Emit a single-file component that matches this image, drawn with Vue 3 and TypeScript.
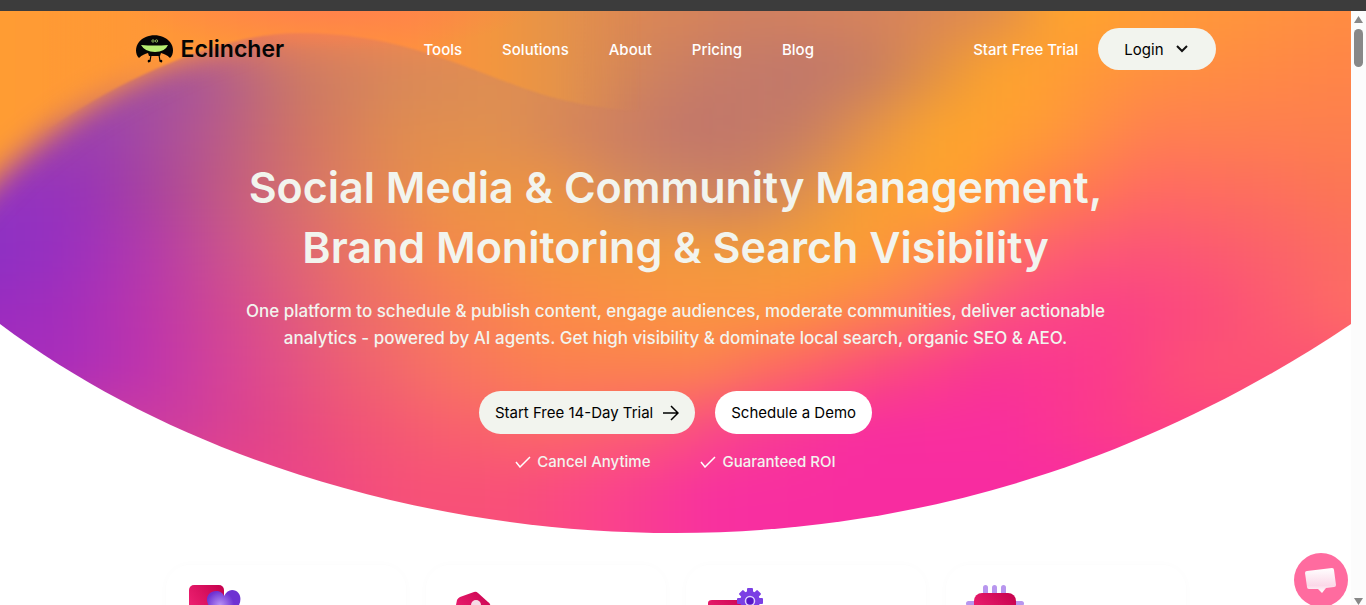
<script setup lang="ts">
const rows: { y: number; stops: [number, string][] }[] = [
  { y: 0, stops: [[0, '#ff9f30'], [150, '#ff9440'], [300, '#ff8449'], [400, '#ff8648'], [520, '#ee8e48'], [600, '#e08a50'], [750, '#d08060'], [900, '#d8845a'], [1000, '#e08c4c'], [1060, '#ffa52c'], [1200, '#ff983a'], [1351, '#ff8c42']] },
  { y: 60, stops: [[0, '#a050a0'], [150, '#a050a0'], [200, '#a95696'], [300, '#cb7a65'], [400, '#d8885a'], [500, '#de8e52'], [600, '#d98a54'], [700, '#c77c66'], [800, '#c0776c'], [870, '#c67c62'], [950, '#e8963e'], [1000, '#ffa52c'], [1150, '#ff9040'], [1351, '#ff8448']] },
  { y: 120, stops: [[0, '#a044a8'], [50, '#a044a8'], [100, '#9a40b0'], [150, '#a64ca0'], [200, '#b45690'], [300, '#d07464'], [400, '#e08c50'], [500, '#e09050'], [600, '#cf8060'], [700, '#c0756c'], [800, '#c67c64'], [900, '#f09c3c'], [950, '#ffa62b'], [1050, '#ff9a38'], [1150, '#ff8050'], [1351, '#fd7f4e']] },
  { y: 180, stops: [[0, '#9334c0'], [75, '#9632ba'], [150, '#a8429f'], [250, '#ca6279'], [350, '#e0805c'], [450, '#ec9244'], [550, '#ec9444'], [650, '#d08860'], [750, '#cc8060'], [800, '#dc9050'], [870, '#fa9f33'], [950, '#ffa22e'], [1050, '#ff8148'], [1150, '#ff6a62'], [1250, '#fd6e5e'], [1351, '#fc7654']] },
  { y: 240, stops: [[0, '#8c30c4'], [75, '#9c30be'], [150, '#b43aaa'], [250, '#d25a84'], [350, '#ea7362'], [450, '#f48a4c'], [550, '#f2943f'], [750, '#f09a3c'], [850, '#fb9f32'], [950, '#fd8948'], [1050, '#fd5f70'], [1150, '#fb5478'], [1250, '#fb5f6c'], [1351, '#fc6e60']] },
  { y: 300, stops: [[0, '#9a2cc0'], [75, '#a62eba'], [150, '#bc36aa'], [250, '#d84e8a'], [350, '#ec6a6c'], [450, '#f77c58'], [550, '#fb8a48'], [700, '#fb9540'], [800, '#fc9240'], [900, '#fc7a58'], [1000, '#fa5080'], [1100, '#fa4088'], [1200, '#fb4a7c'], [1351, '#fd6c64']] },
  { y: 360, stops: [[60, '#a82cbc'], [150, '#c034ac'], [250, '#dc4890'], [350, '#ee5e74'], [450, '#f87462'], [550, '#fb8050'], [700, '#fb8250'], [800, '#fc6268'], [900, '#fa4484'], [1000, '#f93494'], [1100, '#fb3a8c'], [1200, '#fc5274']] },
  { y: 420, stops: [[170, '#cc3ca0'], [250, '#de428c'], [350, '#f05278'], [450, '#f8606e'], [550, '#fb6868'], [650, '#fb5a76'], [750, '#f83e92'], [850, '#f82ea0'], [1000, '#f92e9e'], [1150, '#fc4082']] },
  { y: 480, stops: [[300, '#ec4488'], [400, '#f65078'], [500, '#f95078'], [600, '#fa448a'], [720, '#f830a0'], [900, '#f82ca0']] },
]
const nav: string[] = ['Tools', 'Solutions', 'About', 'Pricing', 'Blog']
const perks: string[] = ['Cancel Anytime', 'Guaranteed ROI']
const cards: string[] = ['heart', 'tag', 'gear', 'chip']
</script>

<template>
  <div class="page">
    <div class="chrome"></div>
    <div class="body">
      <main class="view">
        <section class="hero">
          <svg class="backdrop" viewBox="0 0 1351 522" preserveAspectRatio="none" aria-hidden="true">
            <defs>
              <linearGradient v-for="(r, i) in rows" :id="'band' + i" :key="i" gradientUnits="userSpaceOnUse" x1="0" y1="0" x2="1351" y2="0">
                <stop v-for="s in r.stops" :key="s[0]" :offset="s[0] / 1351" :stop-color="s[1]" />
              </linearGradient>
              <linearGradient id="sky" gradientUnits="userSpaceOnUse" x1="0" y1="0" x2="660" y2="0">
                <stop offset="0" stop-color="#ff9c33" /><stop offset=".3" stop-color="#ff9639" /><stop offset=".62" stop-color="#ff8f40" /><stop offset=".75" stop-color="#f2963f" /><stop offset=".84" stop-color="#e69348" /><stop offset=".97" stop-color="#d98a54" stop-opacity="0" />
              </linearGradient>
              <radialGradient id="glow" gradientUnits="userSpaceOnUse" cx="330" cy="-10" r="1" gradientTransform="translate(330 -10) scale(210 50) translate(-330 10)">
                <stop offset="0" stop-color="#ff7f4e" /><stop offset="1" stop-color="#ff7f4e" stop-opacity="0" />
              </radialGradient>
              <linearGradient id="fade" gradientUnits="userSpaceOnUse" x1="40" y1="0" x2="170" y2="0">
                <stop offset="0" stop-color="#000" /><stop offset="1" stop-color="#fff" />
              </linearGradient>
              <mask id="right" maskUnits="userSpaceOnUse" x="0" y="0" width="1351" height="522"><rect width="1351" height="522" fill="url(#fade)" /></mask>
              <filter id="mix" filterUnits="userSpaceOnUse" x="-100" y="-100" width="1551" height="750" color-interpolation-filters="sRGB"><feGaussianBlur stdDeviation="22 26" /></filter>
              <filter id="soft" filterUnits="userSpaceOnUse" x="-100" y="-100" width="900" height="400" color-interpolation-filters="sRGB"><feGaussianBlur stdDeviation="15" /></filter>
              <filter id="crisp" filterUnits="userSpaceOnUse" x="-100" y="-100" width="900" height="400" color-interpolation-filters="sRGB"><feGaussianBlur stdDeviation="1" /></filter>
              <clipPath id="bowl"><path d="M0 0H1351V313C1150 448 920 522 675 522S180 448 0 313Z" /></clipPath>
            </defs>
            <g clip-path="url(#bowl)">
              <g filter="url(#mix)">
                <rect v-for="(r, i) in rows" :key="i" x="-100" :y="i === 0 ? -100 : r.y - 30" width="1551" :height="i === 0 ? 130 : i === 8 ? 200 : 61" :fill="`url(#band${i})`" />
              </g>
              <path filter="url(#soft)" fill="url(#sky)" d="M-90 -80H240V25C170 45 90 90 40 130C0 160 -40 210 -90 260Z" />
              <g mask="url(#right)"><path filter="url(#crisp)" fill="url(#sky)" d="M0 -50H660V100C600 100 560 90 520 76C450 50 390 22 300 22C220 22 130 65 60 110L0 150Z" /></g>
              <rect x="80" width="500" height="60" fill="url(#glow)" />
            </g>
          </svg>

          <header class="top">
            <a class="logo" href="#">
              <svg width="38" height="30" viewBox="0 0 38 30" aria-hidden="true">
                <path d="M3 24C-1 20 -1 13 3 8C10 -1 27 -1 34 8C38 13 38 20 34 24C31 21 28 20 25 19L24 22H13L12 19C9 20 6 21 3 24Z" fill="#050505" />
                <path d="M5 11Q19 12 32 11Q29 18 19 18T5 11Z" fill="#b7ef72" />
                <circle cx="17" cy="7" r="1.200" fill="none" stroke="#b7ef72" stroke-width=".7" /><circle cx="20.500" cy="7" r="1.200" fill="none" stroke="#b7ef72" stroke-width=".7" />
                <path d="M15 21L14 27L12 28M23 21L24 27L26 28" fill="none" stroke="#050505" stroke-width="1.200" /><circle cx="13" cy="27" r="1.300" /><circle cx="25" cy="27" r="1.300" />
              </svg>
              <span>Eclincher</span>
            </a>
            <nav class="nav"><a v-for="n in nav" :key="n" href="#">{{ n }}</a></nav>
            <div class="account">
              <a href="#">Start Free Trial</a>
              <button class="login" type="button">Login
                <svg width="12" height="8" viewBox="0 0 12 8" aria-hidden="true"><path d="M1 1L6 6L11 1" fill="none" stroke="#111" stroke-width="2" /></svg>
              </button>
            </div>
          </header>

          <div class="copy">
            <h1>Social Media &amp; Community Management,<br />Brand Monitoring &amp; Search Visibility</h1>
            <p>One platform to schedule &amp; publish content, engage audiences, moderate communities, deliver actionable<br />analytics - powered by AI agents. Get high visibility &amp; dominate local search, organic SEO &amp; AEO.</p>
            <div class="actions">
              <a class="pill tint" href="#">Start Free 14-Day Trial
                <svg width="16" height="16" viewBox="0 0 16 16" aria-hidden="true"><path d="M0 8H15M8 1L15 8L8 15" fill="none" stroke="#000" stroke-width="1.500" /></svg>
              </a>
              <a class="pill" href="#">Schedule a Demo</a>
            </div>
            <ul class="perks">
              <li v-for="p in perks" :key="p">
                <svg width="16" height="12" viewBox="0 0 16 12" aria-hidden="true"><path d="M1 6L5 11L15 1" fill="none" stroke="#fff" stroke-width="1.500" /></svg>{{ p }}
              </li>
            </ul>
          </div>
        </section>

        <section class="cards">
          <article v-for="c in cards" :key="c" class="card">
            <svg width="64" height="60" viewBox="0 0 64 60" aria-hidden="true">
              <defs>
                <linearGradient id="rose" x1="0" y1="1" x2="1" y2="0"><stop offset="0" stop-color="#ff2e80" /><stop offset="1" stop-color="#c4004c" /></linearGradient>
                <radialGradient id="violet" gradientUnits="userSpaceOnUse" cx="34" cy="22" r="14"><stop offset="0" stop-color="#b892f6" /><stop offset="1" stop-color="#6e32d2" /></radialGradient>
              </defs>
              <template v-if="c === 'heart'">
                <rect x="3" y="2" width="35" height="50" rx="5" fill="url(#rose)" />
                <path d="M38 44L23 23C18 15 23 8 30 8C34 8 37 10 38 13C40 9 43 7 46 7C54 7 57 16 52 24Z" fill="url(#violet)" />
              </template>
              <template v-else-if="c === 'tag'">
                <path d="M10 22L11 17Q12 15 14 14L28 9Q30 8 32 10L42 19Q44 20 45 24L50 50H6Z" fill="url(#rose)" /><circle cx="30" cy="22" r="5" fill="#f6dbe6" />
              </template>
              <template v-else-if="c === 'gear'">
                <path d="M2 20Q2 17 6 17H50V50H2Z" fill="url(#rose)" />
                <g fill="#7b3fe4"><circle cx="44" cy="18" r="10" /><rect v-for="a in [0, 45, 90, 135]" :key="a" x="41" y="5" width="6" height="26" rx="1" :transform="`rotate(${a} 44 18)`" /></g>
                <circle cx="44" cy="18" r="4.500" fill="#5716c8" stroke="#e2d4ff" stroke-width="1.500" />
              </template>
              <template v-else>
                <g fill="#b896ee"><rect x="17" y="2" width="5" height="20" rx="2.500" /><rect x="26" y="2" width="5" height="20" rx="2.500" /><rect x="35" y="2" width="5" height="20" rx="2.500" /><rect x="0" y="18" width="58" height="5" rx="2.500" /></g>
                <rect x="8" y="10" width="42" height="42" rx="8" fill="url(#rose)" />
              </template>
            </svg>
          </article>
        </section>
      </main>
      <div class="rail" aria-hidden="true">
        <svg width="9" height="7" viewBox="0 0 9 7"><path d="M4.500 0L9 7H0Z" fill="#888" /></svg>
        <i></i>
        <svg width="9" height="7" viewBox="0 0 9 7"><path d="M0 0H9L4.500 7Z" fill="#888" /></svg>
      </div>
    </div>
    <button class="chat" type="button" aria-label="Open chat">
      <svg width="54" height="54" viewBox="0 0 54 54" aria-hidden="true">
        <defs><linearGradient id="bubble" x1="0" y1="0" x2="0" y2="1"><stop offset="0" stop-color="#fff" /><stop offset=".7" stop-color="#fbd8e8" /><stop offset="1" stop-color="#fff" /></linearGradient></defs>
        <path d="M13 18L38 15Q40 15 40 17L42 32Q42 34 40 34L32 35L28 40L24 36L15 36Q13 36 13 34L11 20Q11 18 13 18Z" fill="url(#bubble)" />
      </svg>
    </button>
  </div>
</template>

<style>
html, body { margin: 0; height: 100%; overflow: hidden; }
#app { height: 100%; }
</style>
<style scoped>
.page { position: relative; height: 100%; display: flex; flex-direction: column; background: #fff; font-family: Inter, "Liberation Sans", sans-serif; font-size: 15px; overflow: hidden; }
a { color: inherit; text-decoration: none; }
.chrome { height: 11px; flex: none; background: #3c3c3c; }
.body { flex: 1; min-height: 0; display: flex; }
.view { flex: 1; min-width: 0; overflow: hidden; }
.rail { width: 15px; flex: none; background: #fcfcfc; display: flex; flex-direction: column; align-items: center; box-sizing: border-box; padding: 5px 0 0; gap: 6px; }
.rail i { width: 9px; height: 38px; border-radius: 5px; background: #888; }
.rail svg:last-child { margin-top: auto; }
.hero { position: relative; height: 522px; }
.backdrop { position: absolute; inset: 0; width: 100%; height: 100%; }
.top { position: relative; width: 80%; max-width: 1080px; margin: 0 auto; padding-top: 17px; display: grid; grid-template-columns: 288px 1fr auto; align-items: center; color: #fff; font-weight: 500; }
.logo { display: flex; align-items: center; gap: 7px; color: #050505; font-size: 23px; font-weight: 600; }
.nav { display: flex; gap: 40px; }
.account { display: flex; align-items: center; gap: 20px; }
button { font: inherit; border: 0; cursor: pointer; }
.login { display: flex; align-items: center; gap: 12px; height: 42px; padding: 0 28px 0 26px; border-radius: 21px; background: #f2f4ee; color: #000; font-weight: 400; }
.copy { position: relative; text-align: center; color: #f2f4ee; }
h1 { margin: 87px 0 0; font-size: 43px; line-height: 60px; font-weight: 600; }
p { margin: 21px 0 0; font-size: 17px; line-height: 27px; font-weight: 500; }
.actions { display: flex; justify-content: center; gap: 20px; margin-top: 39px; }
.pill { display: flex; align-items: center; gap: 10px; height: 43px; padding: 0 16px; border-radius: 22px; background: #fff; color: #000; }
.tint { background: #f2f4ee; }
.perks { list-style: none; display: flex; justify-content: center; gap: 50px; margin: 18px 0 0; padding: 0; font-weight: 500; line-height: 20px; }
.perks li { display: flex; align-items: center; gap: 6px; }
.cards { display: flex; justify-content: center; gap: 20px; padding-top: 32px; }
.card { width: 240px; height: 240px; box-sizing: border-box; padding: 18px 20px; border-radius: 24px; box-shadow: 0 0 10px rgba(0, 0, 0, .02); }
.chat { position: absolute; right: 18px; bottom: -2px; width: 54px; height: 54px; padding: 0; border-radius: 50%; background: #ff6b9f; }
</style>
